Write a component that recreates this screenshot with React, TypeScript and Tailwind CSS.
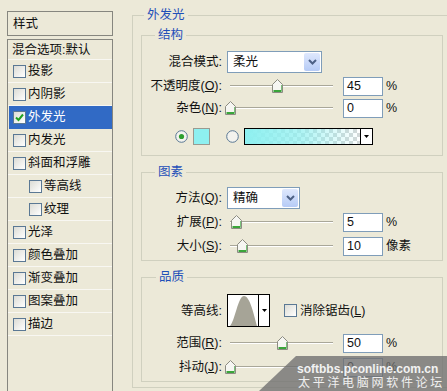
import React from 'react';

type Row = { label: string; indent?: boolean; checked?: boolean; selected?: boolean };

const rows: Row[] = [
  { label: '投影' },
  { label: '内阴影' },
  { label: '外发光', checked: true, selected: true },
  { label: '内发光' },
  { label: '斜面和浮雕' },
  { label: '等高线', indent: true },
  { label: '纹理', indent: true },
  { label: '光泽' },
  { label: '颜色叠加' },
  { label: '渐变叠加' },
  { label: '图案叠加' },
  { label: '描边' },
];

function Checkbox({ checked = false }: { checked?: boolean }) {
  return (
    <span className="flex h-[13px] w-[13px] shrink-0 items-center justify-center border border-[#5a7894] bg-gradient-to-br from-[#dcdcd5] to-white">
      {checked && (
        <svg width="9" height="9" viewBox="0 0 9 9">
          <path d="M1 4.5 L3.5 7 L8 1.5" fill="none" stroke="#21a121" strokeWidth="2" />
        </svg>
      )}
    </span>
  );
}

function Radio({ checked = false }: { checked?: boolean }) {
  return (
    <svg width="13" height="13" viewBox="0 0 13 13" className="shrink-0">
      <circle cx="6.5" cy="6.5" r="5.8" fill="#f3f3ee" stroke="#5a7894" />
      {checked && <circle cx="6.5" cy="6.5" r="2.6" fill="#2e9f2e" />}
    </svg>
  );
}

function Label({ children }: { children: React.ReactNode }) {
  return <span className="w-[80px] shrink-0 text-right">{children}</span>;
}

function Slider({ left }: { left: number }) {
  return (
    <div className="relative ml-[3px] h-[20px] w-[112px] shrink-0">
      <div className="absolute left-[5px] top-[9px] h-[2px] w-[103px] border-t border-[#a9a799] bg-white" />
      <svg className="absolute top-[3px]" style={{ left }} width="11" height="14" viewBox="0 0 11 14">
        <path d="M0.5 5.5 L5.5 0.5 L10.5 5.5 V13.5 H0.5 Z" fill="#f6f6f2" stroke="#8c8c82" />
        <path d="M1.5 12 H9.5" stroke="#3aa53a" strokeWidth="2" />
        <path d="M9.5 6 V12" stroke="#7ac27a" strokeWidth="1" />
      </svg>
    </div>
  );
}

function NumBox({ value }: { value: string }) {
  return (
    <div className="ml-[6px] flex h-[19px] w-[40px] shrink-0 items-center border border-[#7f9db9] bg-white pl-[3px]">
      {value}
    </div>
  );
}

function SliderRow({
  label,
  thumb,
  value,
  unit,
  className,
}: {
  label: React.ReactNode;
  thumb: number;
  value: string;
  unit: string;
  className: string;
}) {
  return (
    <div className={className}>
      <Label>{label}</Label>
      <Slider left={thumb} />
      <NumBox value={value} />
      <span className="ml-[3px]">{unit}</span>
    </div>
  );
}

function Select({ value, width }: { value: string; width: string }) {
  return (
    <div className={`ml-[5px] flex h-[22px] items-center border border-[#7f9db9] bg-white ${width}`}>
      <span className="flex-1 pl-[5px]">{value}</span>
      <span className="mr-[1px] flex h-[18px] w-[16px] items-center justify-center rounded-[2px] bg-gradient-to-b from-[#dfe8fd] to-[#b6cbf6]">
        <svg width="9" height="6" viewBox="0 0 9 6">
          <path d="M1 1 L4.5 4.5 L8 1" fill="none" stroke="#4d6185" strokeWidth="2" />
        </svg>
      </span>
    </div>
  );
}

export default function App() {
  return (
    <div className="relative flex h-[391px] w-[447px] items-start overflow-hidden bg-[#ece9d8] font-['Liberation_Sans','Noto_Sans_CJK_SC',sans-serif] text-[12.5px] leading-[14px] text-[#111]">
      {/* style list */}
      <div className="ml-[7px] mt-[11px] flex w-[106px] shrink-0 flex-col">
        <div className="flex h-[25px] items-center border border-[#86867f] pl-[5px]">样式</div>
        <div className="mt-[3px] h-[360px] border border-[#86867f]">
          <div className="flex h-[20px] items-center border-b border-[#f8f7f2] pl-[4px]">混合选项:默认</div>
          {rows.map((r) => (
            <div
              key={r.label}
              className={`flex h-[23px] items-center border-b ${
                r.selected ? 'ml-[1px] border-[#316ac5] bg-[#316ac5] text-white' : 'border-[#f8f7f2]'
              } ${r.indent ? 'pl-[21px]' : r.selected ? 'pl-[4px]' : 'pl-[5px]'}`}
            >
              <Checkbox checked={r.checked} />
              <span className="ml-[2px]">{r.label}</span>
            </div>
          ))}
        </div>
      </div>

      {/* outer glow settings */}
      <fieldset className="ml-[19px] mt-[8px] w-[321px] shrink-0 border border-[#d0d0bf] px-[8px] pb-[5px] pt-[6px]">
        <legend className="ml-[3px] px-[3px] text-[#1f4fb8]">外发光</legend>

        <fieldset className="w-[302px] border border-[#d0d0bf] pb-[10px] pt-[9px]">
          <legend className="ml-[13px] px-[3px] text-[#1f4fb8]">结构</legend>
          <div className="flex h-[22px] items-center">
            <Label>混合模式:</Label>
            <Select value="柔光" width="w-[95px]" />
          </div>
          <SliderRow
            className="mt-[3px] flex h-[20px] items-center"
            label={<>不透明度(<u>O</u>):</>}
            thumb={47}
            value="45"
            unit="%"
          />
          <SliderRow
            className="mt-[2px] flex h-[20px] items-center"
            label={<>杂色(<u>N</u>):</>}
            thumb={0}
            value="0"
            unit="%"
          />
          <div className="mt-[9px] flex h-[18px] items-center pl-[33px]">
            <Radio checked />
            <div className="ml-[5px] h-[17px] w-[17px] border border-[#9a9a90] bg-[#8ef0f0]" />
            <div className="ml-[16px]">
              <Radio />
            </div>
            <div className="ml-[5px] flex h-[17px] w-[129px] border border-black">
              <div className="flex-1 bg-[image:repeating-conic-gradient(#d3d8d8_0_25%,#ffffff_0_50%)] bg-[length:8px_8px]">
                <div className="h-full w-full bg-gradient-to-r from-[#8ef0f0] via-[#8ef0f0]/70 to-[#8ef0f0]/0" />
              </div>
              <div className="flex w-[12px] items-center justify-center border-l border-black bg-white">
                <svg width="5" height="3" viewBox="0 0 5 3">
                  <path d="M0 0 H5 L2.5 3 Z" fill="#000" />
                </svg>
              </div>
            </div>
          </div>
        </fieldset>

        <fieldset className="mt-[9px] w-[302px] border border-[#d0d0bf] pb-[4px] pt-[8px]">
          <legend className="ml-[13px] px-[3px] text-[#1f4fb8]">图素</legend>
          <div className="flex h-[22px] items-center">
            <Label>方法(<u>Q</u>):</Label>
            <Select value="精确" width="w-[73px]" />
          </div>
          <SliderRow
            className="mt-[3px] flex h-[20px] items-center"
            label={<>扩展(<u>P</u>):</>}
            thumb={6}
            value="5"
            unit="%"
          />
          <SliderRow
            className="mt-[4px] flex h-[20px] items-center"
            label={<>大小(<u>S</u>):</>}
            thumb={12}
            value="10"
            unit="像素"
          />
        </fieldset>

        <fieldset className="mt-[9px] w-[302px] border border-[#d0d0bf] pb-[4px] pt-[10px]">
          <legend className="ml-[14px] px-[3px] text-[#1f4fb8]">品质</legend>
          <div className="flex h-[33px] items-center">
            <Label>等高线:</Label>
            <div className="ml-[5px] flex h-[33px] w-[43px] border border-black bg-white">
              <svg width="30" height="31" viewBox="0 0 30 31" className="shrink-0">
                <path d="M2 31 C 7 26, 10 1, 16 1 C 22 1, 26 20, 29 31 Z" fill="#a6a497" />
              </svg>
              <div className="flex flex-1 items-center justify-center border-l border-black">
                <svg width="5" height="3" viewBox="0 0 5 3">
                  <path d="M0 0 H5 L2.5 3 Z" fill="#000" />
                </svg>
              </div>
            </div>
            <div className="ml-[14px] flex items-center">
              <Checkbox />
              <span className="ml-[3px]">消除锯齿(<u>L</u>)</span>
            </div>
          </div>
          <SliderRow
            className="mt-[6px] flex h-[20px] items-center"
            label={<>范围(<u>R</u>):</>}
            thumb={52}
            value="50"
            unit="%"
          />
          <SliderRow
            className="mt-[4px] flex h-[20px] items-center"
            label={<>抖动(<u>J</u>):</>}
            thumb={0}
            value="0"
            unit="%"
          />
        </fieldset>
      </fieldset>

      {/* watermark */}
      <svg className="pointer-events-none absolute left-0 top-0" width="447" height="391">
        <polygon points="296,356 447,356 447,391 259,391" fill="#6e6e6e" fillOpacity="0.78" />
      </svg>
      <div className="pointer-events-none absolute left-[297px] top-[362px] text-[12px] font-bold leading-[14px] text-[#f2f2f2]">
        softbbs.pconline.com.cn
      </div>
      <div className="pointer-events-none absolute left-[298px] top-[376px] text-[12px] leading-[14px] tracking-[2.7px] text-[#efefef]">
        太平洋电脑网软件论坛
      </div>
    </div>
  );
}
